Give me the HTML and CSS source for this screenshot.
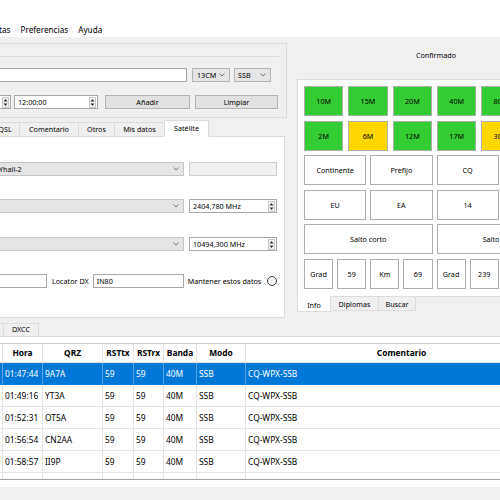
FILE: index.html
```html
<!DOCTYPE html>
<html>
<head>
<title>Log QSO</title>
<link rel="stylesheet" href="styles.css">
</head>
<body>

<div id="menuBar">
	<span class="menuItem first">tas</span>
	<span class="menuItem">Preferencias</span>
	<span class="menuItem">Ayuda</span>
</div>

<div id="mainWrap">
	<div id="leftCol">
		<!-- entry group -->
		<div id="qsoGroup">
			<div class="groupLine"></div>
			<div class="formRow rowOne">
				<div class="field grow"></div>
				<div class="combo bandCombo"><span>13CM</span>
					<svg class="chev" width="6" height="4" viewBox="0 0 6 4"><path d="M0.5 0.5 L3 3 L5.5 0.5" fill="none" stroke="#555" stroke-width="0.8"/></svg>
				</div>
				<div class="combo modeCombo"><span>SSB</span>
					<svg class="chev" width="6" height="4" viewBox="0 0 6 4"><path d="M0.5 0.5 L3 3 L5.5 0.5" fill="none" stroke="#555" stroke-width="0.8"/></svg>
				</div>
			</div>
			<div class="formRow rowTwo">
				<div class="field dateSpin">
					<svg class="spinArrows" width="7" height="11" viewBox="0 0 7 11"><rect x="0.5" y="0.5" width="6" height="10" fill="#f4f4f4" stroke="#c8c8c8"/><path d="M3.5 2 L5.5 4.5 H1.5 Z M3.5 9 L5.5 6.5 H1.5 Z" fill="#333"/></svg>
				</div>
				<div class="field timeSpin"><span>12:00:00</span>
					<svg class="spinArrows" width="7" height="11" viewBox="0 0 7 11"><rect x="0.5" y="0.5" width="6" height="10" fill="#f4f4f4" stroke="#c8c8c8"/><path d="M3.5 2 L5.5 4.5 H1.5 Z M3.5 9 L5.5 6.5 H1.5 Z" fill="#333"/></svg>
				</div>
				<div class="button addButton">Añadir</div>
				<div class="button clearButton">Limpiar</div>
			</div>
		</div>

		<!-- tabs of the entry -->
		<div class="tabBar topTabs">
			<div class="tab qslTab">QSL</div>
			<div class="tab comTab">Comentario</div>
			<div class="tab otrosTab">Otros</div>
			<div class="tab misTab">Mis datos</div>
			<div class="tab satTab selected">Satélite</div>
		</div>
		<div id="satPanel">
			<div class="satRow">
				<div class="combo grow satCombo"><span>Yhail-2</span>
					<svg class="chev" width="6" height="4" viewBox="0 0 6 4"><path d="M0.5 0.5 L3 3 L5.5 0.5" fill="none" stroke="#555" stroke-width="0.8"/></svg>
				</div>
				<div class="field sideField disabled"></div>
			</div>
			<div class="satRow">
				<div class="combo grow satCombo">
					<svg class="chev" width="6" height="4" viewBox="0 0 6 4"><path d="M0.5 0.5 L3 3 L5.5 0.5" fill="none" stroke="#555" stroke-width="0.8"/></svg>
				</div>
				<div class="field sideField"><span>2404,780 MHz</span>
					<svg class="spinArrows" width="7" height="11" viewBox="0 0 7 11"><rect x="0.5" y="0.5" width="6" height="10" fill="#f4f4f4" stroke="#c8c8c8"/><path d="M3.5 2 L5.5 4.5 H1.5 Z M3.5 9 L5.5 6.5 H1.5 Z" fill="#333"/></svg>
				</div>
			</div>
			<div class="satRow third">
				<div class="combo grow satCombo">
					<svg class="chev" width="6" height="4" viewBox="0 0 6 4"><path d="M0.5 0.5 L3 3 L5.5 0.5" fill="none" stroke="#555" stroke-width="0.8"/></svg>
				</div>
				<div class="field sideField"><span>10494,300 MHz</span>
					<svg class="spinArrows" width="7" height="11" viewBox="0 0 7 11"><rect x="0.5" y="0.5" width="6" height="10" fill="#f4f4f4" stroke="#c8c8c8"/><path d="M3.5 2 L5.5 4.5 H1.5 Z M3.5 9 L5.5 6.5 H1.5 Z" fill="#333"/></svg>
				</div>
			</div>
			<div class="satRow">
				<div class="field locField"></div>
				<span class="label locLabel">Locator DX</span>
				<div class="field dxField"><span>IN80</span></div>
				<span class="label keepLabel">Mantener estos datos</span>
				<span class="radio"></span>
			</div>
		</div>
	</div>

	<div id="rightCol">
		<div id="confirmLabel">Confirmado</div>
		<div id="awardPanel">
			<div class="gridRow bands">
				<div class="cell green">10M</div>
				<div class="cell green">15M</div>
				<div class="cell green">20M</div>
				<div class="cell green">40M</div>
				<div class="cell green">80M</div>
				<div class="cell green">160M</div>
			</div>
			<div class="gridRow bands">
				<div class="cell green">2M</div>
				<div class="cell yellow">6M</div>
				<div class="cell green">12M</div>
				<div class="cell green">17M</div>
				<div class="cell yellow">30M</div>
				<div class="cell green">60M</div>
			</div>
			<div class="gridRow">
				<div class="cell">Continente</div>
				<div class="cell">Prefijo</div>
				<div class="cell">CQ</div>
				<div class="cell">ITU</div>
			</div>
			<div class="gridRow">
				<div class="cell">EU</div>
				<div class="cell">EA</div>
				<div class="cell">14</div>
				<div class="cell">37</div>
			</div>
			<div class="gridRow">
				<div class="cell">Salto corto</div>
				<div class="cell">Salto largo</div>
			</div>
			<div class="gridRow">
				<div class="cell">Grad</div>
				<div class="cell">59</div>
				<div class="cell">Km</div>
				<div class="cell">69</div>
				<div class="cell">Grad</div>
				<div class="cell">239</div>
				<div class="cell">Km</div>
				<div class="cell">39</div>
			</div>
		</div>
		<div class="southTabs">
			<div class="stab selected infoTab">Info</div>
			<div class="stab dipTab">Diplomas</div>
			<div class="stab busTab">Buscar</div>
		</div>
	</div>
</div>

<div id="bottomWrap">
	<div class="tabBar lowTabs">
		<div class="tab qsoTab">QSOs</div>
		<div class="tab dxccTab">DXCC</div>
	</div>
	<div id="logPanel">
		<div id="logView">
			<div class="logGrid">
				<div class="hcell"></div>
				<div class="hcell">Hora</div>
				<div class="hcell">QRZ</div>
				<div class="hcell">RSTtx</div>
				<div class="hcell">RSTrx</div>
				<div class="hcell">Banda</div>
				<div class="hcell">Modo</div>
				<div class="hcell">Comentario</div>

				<div class="dcell sel"></div>
				<div class="dcell sel">01:47:44</div>
				<div class="dcell sel">9A7A</div>
				<div class="dcell sel">59</div>
				<div class="dcell sel">59</div>
				<div class="dcell sel">40M</div>
				<div class="dcell sel">SSB</div>
				<div class="dcell sel">CQ-WPX-SSB</div>

				<div class="dcell"></div>
				<div class="dcell">01:49:16</div>
				<div class="dcell">YT3A</div>
				<div class="dcell">59</div>
				<div class="dcell">59</div>
				<div class="dcell">40M</div>
				<div class="dcell">SSB</div>
				<div class="dcell">CQ-WPX-SSB</div>

				<div class="dcell"></div>
				<div class="dcell">01:52:31</div>
				<div class="dcell">OT5A</div>
				<div class="dcell">59</div>
				<div class="dcell">59</div>
				<div class="dcell">40M</div>
				<div class="dcell">SSB</div>
				<div class="dcell">CQ-WPX-SSB</div>

				<div class="dcell"></div>
				<div class="dcell">01:56:54</div>
				<div class="dcell">CN2AA</div>
				<div class="dcell">59</div>
				<div class="dcell">59</div>
				<div class="dcell">40M</div>
				<div class="dcell">SSB</div>
				<div class="dcell">CQ-WPX-SSB</div>

				<div class="dcell"></div>
				<div class="dcell">01:58:57</div>
				<div class="dcell">II9P</div>
				<div class="dcell">59</div>
				<div class="dcell">59</div>
				<div class="dcell">40M</div>
				<div class="dcell">SSB</div>
				<div class="dcell">CQ-WPX-SSB</div>

				<div class="dcell"></div>
				<div class="dcell"></div>
				<div class="dcell"></div>
				<div class="dcell"></div>
				<div class="dcell"></div>
				<div class="dcell"></div>
				<div class="dcell"></div>
				<div class="dcell"></div>
			</div>
		</div>
	</div>
</div>

</body>
</html>
```

FILE: styles.css
```css
body {
	margin: 0;
	width: 500px;
	height: 500px;
	overflow: hidden;
	background: #f0f0f0;
	font-family: "Noto Sans", "Open Sans", sans-serif;
	font-size: 7.2px;
	color: #000;
}

/* menu */
#menuBar {
	height: 37px;
	padding-top: 22px;
	box-sizing: border-box;
	background: #fff;
	display: flex;
	font-size: 8.2px;
	line-height: 15px;
}
.menuItem {
	padding: 0 5px;
}
.menuItem.first {
	margin-left: -6px;
}

#mainWrap {
	display: flex;
	align-items: flex-start;
}
#leftCol {
	flex: none;
	width: 307px;
	margin-left: -20px;
}

/* entry group */
#qsoGroup {
	margin-top: 6px;
	border: 1px solid #dcdcdc;
	padding: 12px 0 8px 0;
}
.groupLine {
	border-top: 1px solid #dcdcdc;
	margin-right: 7px;
}
.formRow {
	display: flex;
	align-items: center;
	height: 14px;
}
.rowOne {
	margin-top: 11px;
	margin-right: 15px;
}
.rowTwo {
	margin-top: 13px;
}

.field, .combo, .button {
	box-sizing: border-box;
	height: 14px;
	line-height: 12px;
	white-space: nowrap;
	flex: none;
}
.field {
	background: #fff;
	border: 1px solid #a8a8a8;
	display: flex;
	align-items: center;
	padding: 0 1px 0 3px;
}
.combo {
	background: #e5e5e5;
	border: 1px solid #b4b4b4;
	display: flex;
	align-items: center;
	padding: 0 4px 0 3px;
}
.button {
	background: #e1e1e1;
	border: 1px solid #b4b4b4;
	text-align: center;
}
.grow {
	flex: 1;
}
.chev, .spinArrows {
	margin-left: auto;
	flex: none;
}

.bandCombo { width: 38px; margin-left: 5px; padding-left: 4px; }
.modeCombo { width: 37px; margin-left: 4px; }
.dateSpin { width: 30px; }
.timeSpin { width: 84px; margin-left: 3px; }
.addButton { width: 85px; margin-left: 7px; }
.clearButton { width: 83px; margin-left: 5px; }

/* tabs */
.tabBar {
	display: flex;
	align-items: flex-end;
	position: relative;
	z-index: 1;
}
.topTabs {
	height: 17px;
	margin-top: 2px;
	margin-bottom: -1px;
}
.tab {
	box-sizing: border-box;
	height: 15px;
	border: 1px solid #dcdcdc;
	margin-right: -1px;
	background: #f0f0f0;
	text-align: center;
	line-height: 13px;
	flex: none;
}
.tab.selected {
	height: 17px;
	background: #fff;
	border-bottom-color: #fff;
	line-height: 14px;
}
.qslTab { width: 40px; padding-left: 10px; }
.comTab { width: 60px; }
.otrosTab { width: 37px; }
.misTab { width: 51px; }
.satTab { width: 45px; }

#satPanel {
	background: #fff;
	border: 1px solid #dcdcdc;
	margin-right: 2px;
	padding: 25px 7px 29px 0;
}
.satRow {
	display: flex;
	align-items: center;
	height: 14px;
	margin-top: 23px;
}
.satRow:first-child {
	margin-top: 0;
}
.satRow.third {
	margin-top: 24px;
}
.satCombo {
	border-color: #c4c4c4;
	padding-left: 17px;
}
.sideField {
	width: 88px;
	margin-left: 5px;
}
.disabled {
	background: #f0f0f0;
	border-color: #d0d0d0;
}
.locField { width: 66px; }
.locLabel { margin-left: 5px; }
.dxField { width: 91px; margin-left: 4px; }
.keepLabel { margin-left: 4px; }
.radio {
	margin-left: auto;
	width: 10px;
	height: 10px;
	box-sizing: border-box;
	border: 1px solid #333;
	border-radius: 50%;
	background: #fff;
}

/* right side */
#rightCol {
	flex: none;
	width: 278px;
	margin-left: 10px;
}
#confirmLabel {
	height: 42px;
	box-sizing: border-box;
	padding-top: 11px;
	line-height: 15px;
	text-align: center;
}
#awardPanel {
	background: #fff;
	border: 1px solid #dcdcdc;
	padding: 6px 9px 7px 6px;
	display: flex;
	flex-direction: column;
	gap: 4.6px;
}
.gridRow {
	display: flex;
	gap: 4px;
	height: 30px;
}
.gridRow.bands {
	gap: 5px;
}
.cell {
	flex: 1;
	box-sizing: border-box;
	border: 1px solid #adadad;
	background: #fff;
	display: flex;
	align-items: center;
	justify-content: center;
	white-space: nowrap;
}
.green { background: #33cc33; }
.yellow { background: #ffd700; }

.southTabs {
	display: flex;
	align-items: flex-start;
	margin-top: -1px;
	position: relative;
}
.stab {
	box-sizing: border-box;
	height: 15px;
	border: 1px solid #dcdcdc;
	margin-right: -1px;
	padding-top: 1px;
	line-height: 13px;
	text-align: center;
	background: #f0f0f0;
}
.stab.selected {
	height: 16px;
	border-top-color: #fff;
	background: #fff;
	line-height: 14px;
}
.infoTab { width: 34px; }
.dipTab { width: 49px; }
.busTab { width: 38px; }

/* log table */
.lowTabs {
	height: 13px;
	margin-top: 5px;
}
.lowTabs .tab {
	height: 13px;
	line-height: 11px;
	border-bottom: none;
}
.qsoTab { width: 45px; margin-left: -41px; }
.dxccTab { width: 36px; }

#logPanel {
	background: #fff;
	border-top: 1px solid #dcdcdc;
	padding: 6px 0 7px 0;
}
#logView {
	height: 137px;
	box-sizing: border-box;
	overflow: hidden;
	border-top: 1px solid #cfcfcf;
	border-bottom: 1px solid #a0a0a0;
	margin-left: -40px;
	width: 600px;
}
.logGrid {
	display: grid;
	grid-template-columns: 43px 40px 60px 31px 30px 33px 49px 312px;
	grid-template-rows: 19px;
	grid-auto-rows: 22px;
	font-size: 8.4px;
}
.hcell, .dcell {
	box-sizing: border-box;
	border-right: 1px solid #e3e3e3;
	border-bottom: 1px solid #e3e3e3;
	white-space: nowrap;
	overflow: hidden;
}
.hcell {
	font-weight: bold;
	text-align: center;
	line-height: 18px;
}
.dcell {
	padding-left: 2px;
	line-height: 21px;
}
.dcell.sel {
	background: #0078d7;
	color: #fff;
	border-right-color: #5aa5e6;
	border-bottom-color: #0078d7;
}
```
